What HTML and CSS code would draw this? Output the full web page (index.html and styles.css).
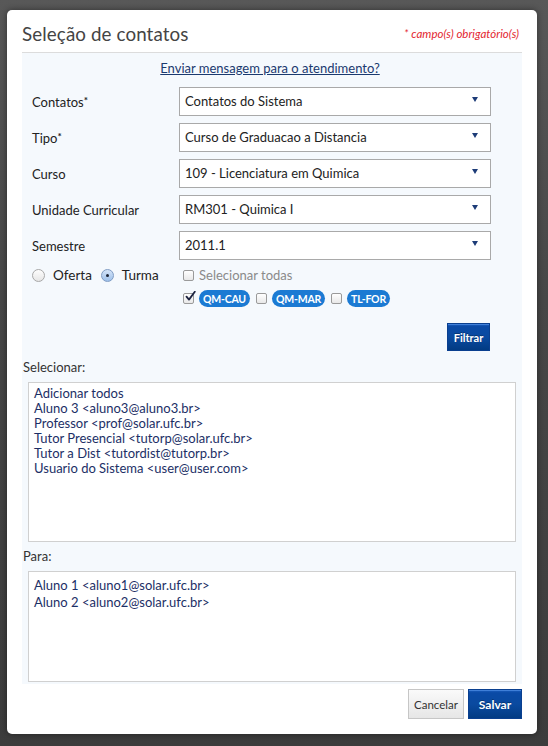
FILE: index.html
```html
<!DOCTYPE html>
<html lang="pt-BR">
<head>
<meta charset="utf-8">
<title>Seleção de contatos</title>
<link rel="stylesheet" href="styles.css">
</head>
<body>
<div class="backdrop">
  <div class="modal">
    <div class="modal-header">
      <h1 class="title">Seleção de contatos</h1>
      <span class="required-note">* campo(s) obrigatório(s)</span>
    </div>
    <div class="panel">
      <div class="link-row"><a class="link" href="#">Enviar mensagem para o atendimento?</a></div>
      <div class="form">
        <div class="form-row">
          <span class="label">Contatos<sup class="star">*</sup></span>
          <div class="select"><span>Contatos do Sistema</span><i class="arrow"></i></div>
        </div>
        <div class="form-row">
          <span class="label">Tipo<sup class="star">*</sup></span>
          <div class="select"><span>Curso de Graduacao a Distancia</span><i class="arrow"></i></div>
        </div>
        <div class="form-row">
          <span class="label">Curso</span>
          <div class="select"><span>109 - Licenciatura em Quimica</span><i class="arrow"></i></div>
        </div>
        <div class="form-row">
          <span class="label">Unidade Curricular</span>
          <div class="select"><span>RM301 - Quimica I</span><i class="arrow"></i></div>
        </div>
        <div class="form-row">
          <span class="label">Semestre</span>
          <div class="select"><span>2011.1</span><i class="arrow"></i></div>
        </div>
        <div class="options">
          <div class="radios">
            <span class="radio"></span><span class="opt-text">Oferta</span>
            <span class="radio checked"></span><span class="opt-text">Turma</span>
          </div>
          <div class="groups">
            <div class="group-row">
              <span class="check"></span><span class="all-text">Selecionar todas</span>
            </div>
            <div class="group-row pills">
              <span class="check checked"><svg viewBox="0 0 12 12" width="12" height="12"><path d="M2.5 5.6 L5 8.6 L10.8 0.8" fill="none" stroke="#1c2340" stroke-width="1.8" stroke-linecap="round" stroke-linejoin="round"/></svg></span><span class="pill">QM-CAU</span>
              <span class="check"></span><span class="pill">QM-MAR</span>
              <span class="check"></span><span class="pill">TL-FOR</span>
            </div>
          </div>
        </div>
        <div class="filter-row"><button class="btn btn-primary btn-filter">Filtrar</button></div>
      </div>
      <div class="list-label">Selecionar:</div>
      <div class="listbox list-select">
        <div>Adicionar todos</div>
        <div>Aluno 3 &lt;aluno3@aluno3.br&gt;</div>
        <div>Professor &lt;prof@solar.ufc.br&gt;</div>
        <div>Tutor Presencial &lt;tutorp@solar.ufc.br&gt;</div>
        <div>Tutor a Dist &lt;tutordist@tutorp.br&gt;</div>
        <div>Usuario do Sistema &lt;user@user.com&gt;</div>
      </div>
      <div class="list-label para">Para:</div>
      <div class="listbox list-to">
        <div>Aluno 1 &lt;aluno1@solar.ufc.br&gt;</div>
        <div>Aluno 2 &lt;aluno2@solar.ufc.br&gt;</div>
      </div>
    </div>
    <div class="footer">
      <button class="btn btn-default">Cancelar</button>
      <button class="btn btn-primary btn-save">Salvar</button>
    </div>
  </div>
</div>
</body>
</html>
```
FILE: styles.css
```css
* { box-sizing: border-box; }
html, body { margin: 0; padding: 0; }
body {
  width: 548px;
  height: 746px;
  overflow: hidden;
  font-family: Lato, "Liberation Sans", sans-serif;
  background: linear-gradient(#585858, #474747 40%, #3c3c3c);
}
.backdrop {
  padding: 10px 11px 12px 7px;
}
.modal {
  width: 530px;
  height: 724px;
  background: #fff;
  border-radius: 5px;
  box-shadow: 0 0 6px rgba(0,0,0,0.45);
  padding: 0 15px 15px 15px;
  display: flex;
  flex-direction: column;
}
.modal-header {
  height: 43px;
  padding-top: 4px;
  display: flex;
  align-items: center;
  justify-content: space-between;
  border-bottom: 1px solid #dcdcdc;
}
.title {
  margin: 0;
  font-size: 18.8px;
  font-weight: normal;
  color: #444;
  letter-spacing: 0.1px;
}
.required-note {
  font-size: 11.5px;
  font-style: italic;
  color: #e3262f;
  margin-right: 3px;
}
.panel {
  background: #f5f9fd;
  padding: 6px 6px 1px 1px;
  height: 631px;
}
.link-row {
  text-align: center;
  line-height: 16px;
  height: 16px;
  padding-left: 1px;
}
.link {
  font-size: 13px;
  color: #1b3a6f;
  text-decoration: underline;
}
.form {
  padding: 12px 25px 0 9px;
}
.form-row {
  display: flex;
  align-items: center;
  height: 29px;
  margin-bottom: 7px;
}
.label {
  width: 147px;
  font-size: 13px;
  color: #222;
}
.star {
  font-size: 10px;
  font-weight: bold;
  vertical-align: 3px;
  line-height: 0;
}
.select {
  width: 312px;
  height: 29px;
  background: #fff;
  border: 1px solid #a9a9a9;
  display: flex;
  align-items: center;
  justify-content: space-between;
  padding: 0 12px 2px 5px;
  font-size: 13px;
  color: #222;
}
.arrow {
  display: block;
  width: 0;
  height: 0;
  border-left: 3px solid transparent;
  border-right: 3px solid transparent;
  border-top: 5px solid #1d3c78;
  margin-bottom: 2px;
}
.options {
  display: flex;
  margin-top: 1px;
}
.radios {
  width: 151px;
  height: 16px;
  display: flex;
  align-items: center;
}
.radio {
  width: 13px;
  height: 13px;
  border-radius: 50%;
  border: 1px solid #a8a8a8;
  background: linear-gradient(#fdfdfd, #e6e6e6);
  margin-right: 8px;
  position: relative;
}
.radio.checked {
  border-color: #7f9cc4;
  background: linear-gradient(#d4e4f8, #9dc0ea);
}
.radio.checked::after {
  content: "";
  position: absolute;
  left: 4px;
  top: 4px;
  width: 3px;
  height: 3px;
  border-radius: 50%;
  background: #1b2436;
}
.opt-text {
  font-size: 13.5px;
  color: #222;
  margin-right: 9px;
}
.groups {
  display: flex;
  flex-direction: column;
}
.group-row {
  display: flex;
  align-items: center;
  height: 16px;
}
.group-row.pills {
  height: 17px;
  margin-top: 7px;
}
.check {
  width: 11px;
  height: 11px;
  border: 1px solid #9a9a9a;
  border-radius: 2px;
  background: linear-gradient(#ffffff, #e8e8e8);
  margin-right: 5px;
  position: relative;
  flex: none;
}
.check svg {
  position: absolute;
  left: 0;
  top: -3px;
}
.pills .check { margin-left: 6px; margin-right: 5px; }
.pills .check:first-child { margin-left: 0; margin-right: 5px; }
.all-text {
  font-size: 13px;
  color: #8a8a8a;
}
.pill {
  display: inline-flex;
  align-items: center;
  height: 17px;
  padding: 0 4px;
  border-radius: 9px;
  background: #1b7ad3;
  color: #fff;
  font-size: 10.5px;
  font-weight: bold;
  letter-spacing: -0.2px;
}
.filter-row {
  display: flex;
  justify-content: flex-end;
  margin-top: 16px;
  padding-right: 1px;
}
.btn {
  font-family: Lato, "Liberation Sans", sans-serif;
  font-size: 11.5px;
  cursor: pointer;
  padding: 0;
}
.btn-primary {
  color: #fff;
  font-weight: bold;
  border: 1px solid #0a3f8f;
  background: linear-gradient(#1e5fc0, #0a4aa6 10%, #0a4aa0 50%, #023b83);
  box-shadow: inset 0 1px 0 #3f7fd8;
  text-shadow: 0 -1px 0 rgba(0,0,0,0.3);
}
.btn-filter {
  width: 43px;
  height: 28px;
  font-size: 11px;
}
.list-label {
  margin-top: 8px;
  font-size: 13px;
  color: #333;
  line-height: 16px;
  padding-left: 0;
}
.list-label.para { margin-top: 6px; }
.listbox {
  margin: 7px 0 0 5px;
  background: #fff;
  border: 1px solid #d0d0d0;
  font-size: 13px;
  color: #1c2f66;
  padding-left: 5px;
}
.list-select {
  height: 160px;
  padding-top: 3px;
  line-height: 15px;
}
.list-to {
  height: 111px;
  padding-top: 5px;
  line-height: 17px;
}
.footer {
  display: flex;
  justify-content: flex-end;
  gap: 4px;
  margin-top: 5px;
}
.btn-default {
  width: 56px;
  height: 30px;
  color: #333;
  border: 1px solid #c6c6c6;
  background: linear-gradient(#fafafa, #e6e6e6);
  font-size: 11.5px;
}
.btn-save {
  width: 54px;
  height: 30px;
  font-size: 12px;
}
```
